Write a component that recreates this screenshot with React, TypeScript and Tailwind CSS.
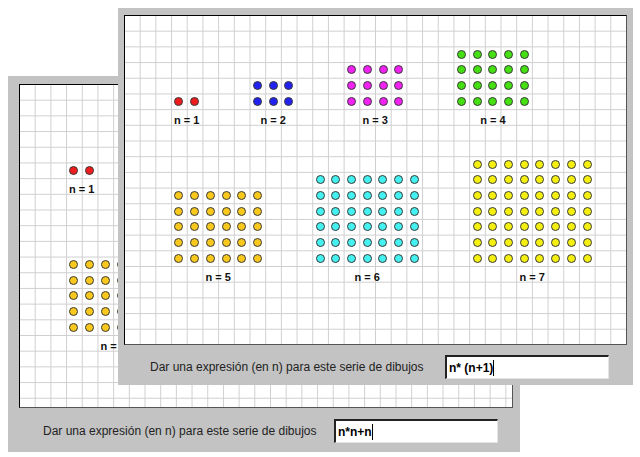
import React from 'react'

const C = 15.7

type Fig = { n: number; col: number; row: number; cols: number; rows: number; fill: string }

const figures: Fig[] = [
  { n: 1, col: 3, row: 5, cols: 2, rows: 1, fill: 'bg-[#ee1c1c]' },
  { n: 2, col: 8, row: 4, cols: 3, rows: 2, fill: 'bg-[#2222f0]' },
  { n: 3, col: 14, row: 3, cols: 4, rows: 3, fill: 'bg-[#f022f0]' },
  { n: 4, col: 21, row: 2, cols: 5, rows: 4, fill: 'bg-[#44e014]' },
  { n: 5, col: 3, row: 11, cols: 6, rows: 5, fill: 'bg-[#f8c81c]' },
  { n: 6, col: 12, row: 10, cols: 7, rows: 6, fill: 'bg-[#44f0f0]' },
  { n: 7, col: 22, row: 9, cols: 8, rows: 7, fill: 'bg-[#f6f010]' },
]

const Figure = ({ f }: { f: Fig }) => (
  <div className="absolute flex flex-col items-center" style={{ left: f.col * C - 1, top: f.row * C - 1 }}>
    {Array.from({ length: f.rows }).map((_, r) => (
      <div key={r} className="flex">
        {Array.from({ length: f.cols }).map((_, c) => (
          <div key={c} className="w-[15.7px] h-[15.7px] flex items-center justify-center">
            <div className={`w-[9px] h-[9px] rounded-full border border-[#3a3a3a] ${f.fill}`} />
          </div>
        ))}
      </div>
    ))}
    <div className="mt-[5px] text-[11px] leading-[13px] font-bold text-[#111] whitespace-nowrap">n = {f.n}</div>
  </div>
)

const Board = ({ className }: { className: string }) => (
  <div
    className={`relative shrink-0 overflow-hidden bg-white border border-[#555] border-t-black border-l-black bg-origin-border bg-[linear-gradient(to_right,#cfcfcf_1px,transparent_1px),linear-gradient(to_bottom,#cfcfcf_1px,transparent_1px)] bg-[size:15.7px_15.7px] ${className}`}
  >
    {figures.map((f) => (
      <Figure key={f.n} f={f} />
    ))}
  </div>
)

const Answer = ({ value }: { value: string }) => (
  <div className="w-[164px] h-[24px] bg-white border-t-2 border-l-2 border-t-[#222] border-l-[#222] border-b border-r border-b-[#e4e4e4] border-r-[#e4e4e4] flex items-center pl-[2px]">
    <span className="text-[12px] font-bold text-black whitespace-pre">{value}</span>
    <span className="w-px h-[16px] bg-black" />
  </div>
)

const Window = ({ className, board, bar, value }: { className: string; board: string; bar: string; value: string }) => (
  <div className={`absolute flex flex-col bg-[#c3c3c3] ${className}`}>
    <Board className={board} />
    <div className={`flex-1 flex items-center justify-between ${bar}`}>
      <span className="text-[12px] text-[#222] whitespace-nowrap">Dar una expresión (en n) para este serie de dibujos</span>
      <Answer value={value} />
    </div>
  </div>
)

export default function App() {
  return (
    <div className="relative w-[640px] h-[457px] bg-white overflow-hidden font-['Liberation_Sans',Arial,sans-serif]">
      <Window
        className="left-[8px] top-[76px] w-[512px] h-[376px] pt-[8px] pl-[11px] pr-[7px]"
        board="w-[494px] h-[324px]"
        bar="pl-[24px] pr-[15px] pt-[2px]"
        value="n*n+n"
      />
      <Window
        className="left-[118px] top-[8px] w-[515px] h-[377px] pt-[7px] pl-[6px] pr-[6px]"
        board="w-[503px] h-[330px]"
        bar="pl-[26px] pr-[18px] pt-[4px]"
        value="n* (n+1)"
      />
    </div>
  )
}
